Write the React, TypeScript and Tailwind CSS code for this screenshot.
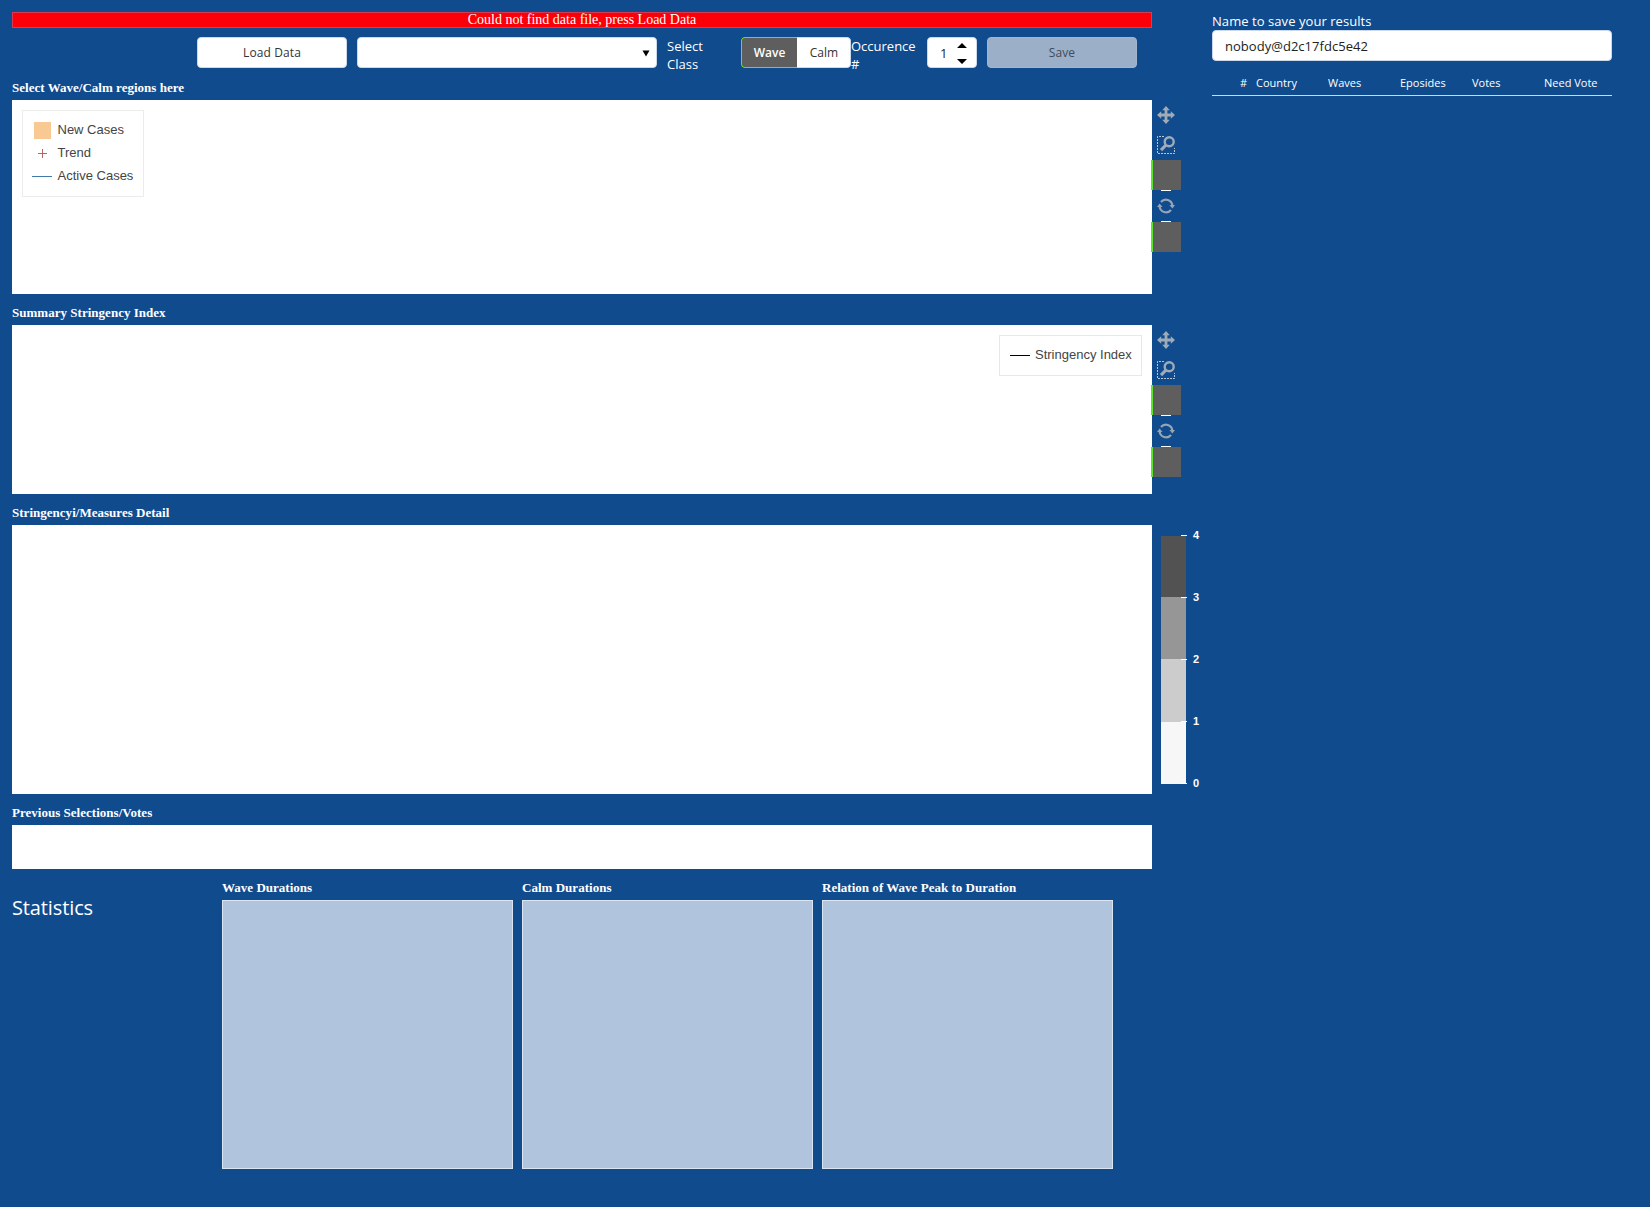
import React from "react";

function Title({ children }: { children: React.ReactNode }) {
  return (
    <h3 className="h-[15px] whitespace-nowrap font-['Liberation_Serif',serif] text-[13px] leading-[13px] font-bold tracking-[0.02px] text-white">
      {children}
    </h3>
  );
}

function MoveIcon() {
  return (
    <svg width="18" height="18" viewBox="0 0 18 18" fill="#9fabb7">
      <path d="M9 0l3.8 4.2H10.4v3.4H13.8V5.2L18 9l-4.2 3.8v-2.4h-3.4v3.4h2.4L9 18l-3.8-4.2h2.4v-3.4H4.2v2.4L0 9l4.2-3.8v2.4h3.4V4.2H5.2z" />
    </svg>
  );
}

function BoxZoomIcon() {
  return (
    <svg width="18" height="18" viewBox="0 0 18 18" fill="none">
      <path d="M7 .5H.5v17h17V12" stroke="#b4c5d9" strokeDasharray="2 1" />
      <circle cx="12.2" cy="5.8" r="4.5" stroke="#9fabb7" strokeWidth="2.4" />
      <path d="M9 9l-5 5.2" stroke="#9fabb7" strokeWidth="3.2" />
    </svg>
  );
}

function ResetIcon() {
  return (
    <svg width="18" height="16" viewBox="0 0 18 16" fill="none">
      <path d="M4 4A6.5 6.5 0 0 1 15.4 7.5M14 12A6.5 6.5 0 0 1 2.6 8.5" stroke="#96a5b5" strokeWidth="2.2" />
      <path d="M12.4 7H18l-2.6 3.6zM0 9h5.6L2.6 5.4z" fill="#96a5b5" />
    </svg>
  );
}

function Toolbar() {
  return (
    <div className="-ml-px flex w-[30px] flex-col items-center">
      <div className="flex h-[30px] items-center"><MoveIcon /></div>
      <div className="flex h-[30px] items-center"><BoxZoomIcon /></div>
      <div className="h-[30px] w-[30px] border-l-2 border-[#5ae62e] bg-[#5e5e5e]" />
      <div className="h-px w-2.5 bg-white" />
      <div className="flex h-[30px] items-center"><ResetIcon /></div>
      <div className="h-px w-2.5 bg-white" />
      <div className="h-[30px] w-[30px] border-l-2 border-[#5ae62e] bg-[#5e5e5e]" />
    </div>
  );
}

function ColorBar() {
  return (
    <div className="ml-[9px] flex pt-[11px]">
      <div className="flex w-[25px] flex-col">
        <div className="h-[61px] bg-[#525252]" />
        <div className="h-[62px] bg-[#969696]" />
        <div className="h-[63px] bg-[#cccccc]" />
        <div className="h-[62px] bg-[#f7f7f7]" />
      </div>
      <div className="-mt-[6px] -ml-[5px] flex h-[259px] flex-col justify-between">
        {[4, 3, 2, 1, 0].map((n) => (
          <div key={n} className="flex h-[11px] items-center gap-[6px]">
            <div className="h-px w-[6px] bg-white" />
            <span className="font-['Liberation_Sans',sans-serif] text-[11px] leading-[11px] font-bold text-white">{n}</span>
          </div>
        ))}
      </div>
    </div>
  );
}

function StatCard({ title }: { title: string }) {
  return (
    <section>
      <Title>{title}</Title>
      <div className="mt-[4px] h-[269px] w-[291px] border border-[#dbe5f2] bg-[#b0c4de]" />
    </section>
  );
}

export default function App() {
  return (
    <main className="flex h-[1207px] w-[1650px] overflow-hidden bg-[#104b8e] pt-3 pl-3 font-['Open_Sans',sans-serif] text-[13px] text-white">
      <div className="w-[1200px] shrink-0">
        <div className="h-4 w-[1140px] border border-[#d83a52] bg-[#fc0009] text-center font-['Liberation_Serif',serif] text-[14px] leading-[14px]">
          Could not find data file, press Load Data
        </div>

        <div className="mt-[9px] flex h-[31px] items-start pl-[185px]">
          <button className="h-[31px] w-[150px] rounded border border-[#ccd9ea] bg-white text-[12px] tracking-[0.1px] text-[#333]">Load Data</button>
          <div className="ml-2.5 flex h-[31px] w-[300px] items-center justify-end rounded border border-[#ccd9ea] bg-white pr-[6px]">
            <svg className="mt-px" width="8" height="7" viewBox="0 0 8 7"><path d="M0.5 0.5h7L4 6.5z" fill="#000" /></svg>
          </div>
          <div className="ml-2.5 w-[74px] pr-4 leading-[18px]">Select Class</div>
          <div className="flex h-[31px] w-[110px] overflow-hidden rounded text-[12px]">
            <div className="flex w-[56px] items-center justify-center rounded-l border border-r-0 border-[#5ae62e] bg-[#5e5e5e] pt-px font-semibold">Wave</div>
            <div className="flex flex-1 items-center justify-center rounded-r border border-l-0 border-[#ccd9ea] bg-white pt-px pl-px text-[#333]">Calm</div>
          </div>
          <div className="w-[76px] leading-[18px]">Occurence #</div>
          <div className="flex h-[31px] w-[50px] items-center rounded border border-[#ccd9ea] bg-white pl-[12px] text-[#222]">
            <span className="w-[8px] pt-[2px]">1</span>
            <svg className="mt-[2px] ml-[9px]" width="10" height="21" viewBox="0 0 10 21"><path d="M0 5L5 0l5 5zM0 16h10l-5 5z" fill="#000" /></svg>
          </div>
          <button className="ml-2.5 h-[31px] w-[150px] rounded border border-[#a3b5cd] bg-[#9bafc8] text-[12px] tracking-[0.1px] text-[#3c4c60]">Save</button>
        </div>

        <section className="mt-[13px] h-[213px]">
          <Title>Select Wave/Calm regions here</Title>
          <div className="mt-[4px] flex">
            <div className="h-[194px] w-[1140px] bg-white pt-2.5 pl-2.5">
              <div className="flex h-[87px] w-[122px] flex-col border border-[#ececec] pt-[7px] pl-[9px] font-['Liberation_Sans',sans-serif] text-[13px] whitespace-nowrap text-[#444]">
                <div className="flex h-[23px] items-center"><svg className="mr-[5.5px]" width="20" height="21"><rect x="2" y="3" width="17" height="17" fill="#f9c993" /></svg>New Cases</div>
                <div className="flex h-[23px] items-center"><svg className="mr-[5.5px]" width="20" height="21"><path d="M6 11.5h9M10.5 7v9" stroke="#b56565" /></svg>Trend</div>
                <div className="flex h-[23px] items-center"><svg className="mr-[5.5px]" width="20" height="21"><path d="M0 11.5h20" stroke="#3f7aa8" /></svg>Active Cases</div>
              </div>
            </div>
            <Toolbar />
          </div>
        </section>

        <section className="mt-[12px] h-[188px]">
          <Title>Summary Stringency Index</Title>
          <div className="mt-[4px] flex">
            <div className="flex h-[169px] w-[1140px] items-start justify-end bg-white pt-2.5 pr-2.5">
              <div className="flex h-[41px] w-[143px] items-center border border-[#e6e9e9] pl-[10px] font-['Liberation_Sans',sans-serif] text-[13px] whitespace-nowrap text-[#444]">
                <svg className="mr-[5px]" width="20" height="21"><path d="M0 10.5h20" stroke="#000" /></svg>
                <span className="relative -top-px">Stringency Index</span>
              </div>
            </div>
            <Toolbar />
          </div>
        </section>

        <section className="mt-[12px] h-[288px]">
          <Title>Stringencyi/Measures Detail</Title>
          <div className="mt-[4px] flex">
            <div className="h-[269px] w-[1140px] bg-white" />
            <ColorBar />
          </div>
        </section>

        <section className="mt-[12px] h-[63px]">
          <Title>Previous Selections/Votes</Title>
          <div className="mt-[4px] h-[44px] w-[1140px] bg-white" />
        </section>

        <div className="mt-[12px] flex">
          <h2 className="w-[210px] pt-[13px] text-[20px] leading-[28px] tracking-[-0.12px]">Statistics</h2>
          <div className="flex gap-[9px]">
            <StatCard title="Wave Durations" />
            <StatCard title="Calm Durations" />
            <StatCard title="Relation of Wave Peak to Duration" />
          </div>
        </div>
      </div>

      <aside className="w-[400px] shrink-0">
        <label className="block h-[18px] leading-[18px] tracking-[0.06px]">Name to save your results</label>
        <div className="flex h-[31px] items-center rounded border border-[#ccd9ea] bg-white pt-[2px] pl-[12px] tracking-[0.03px] text-[#222]">nobody@d2c17fdc5e42</div>
        <div className="mt-[10px] flex h-[25px] items-center border-b border-[#ccd9ea] pb-[2px] text-[11px] leading-[15px]">
          <span className="w-[35px] text-right">#</span>
          <span className="w-[81px] pl-[9px]">Country</span>
          <span className="w-[72px]">Waves</span>
          <span className="w-[72px]">Eposides</span>
          <span className="w-[72px]">Votes</span>
          <span>Need Vote</span>
        </div>
      </aside>
    </main>
  );
}
